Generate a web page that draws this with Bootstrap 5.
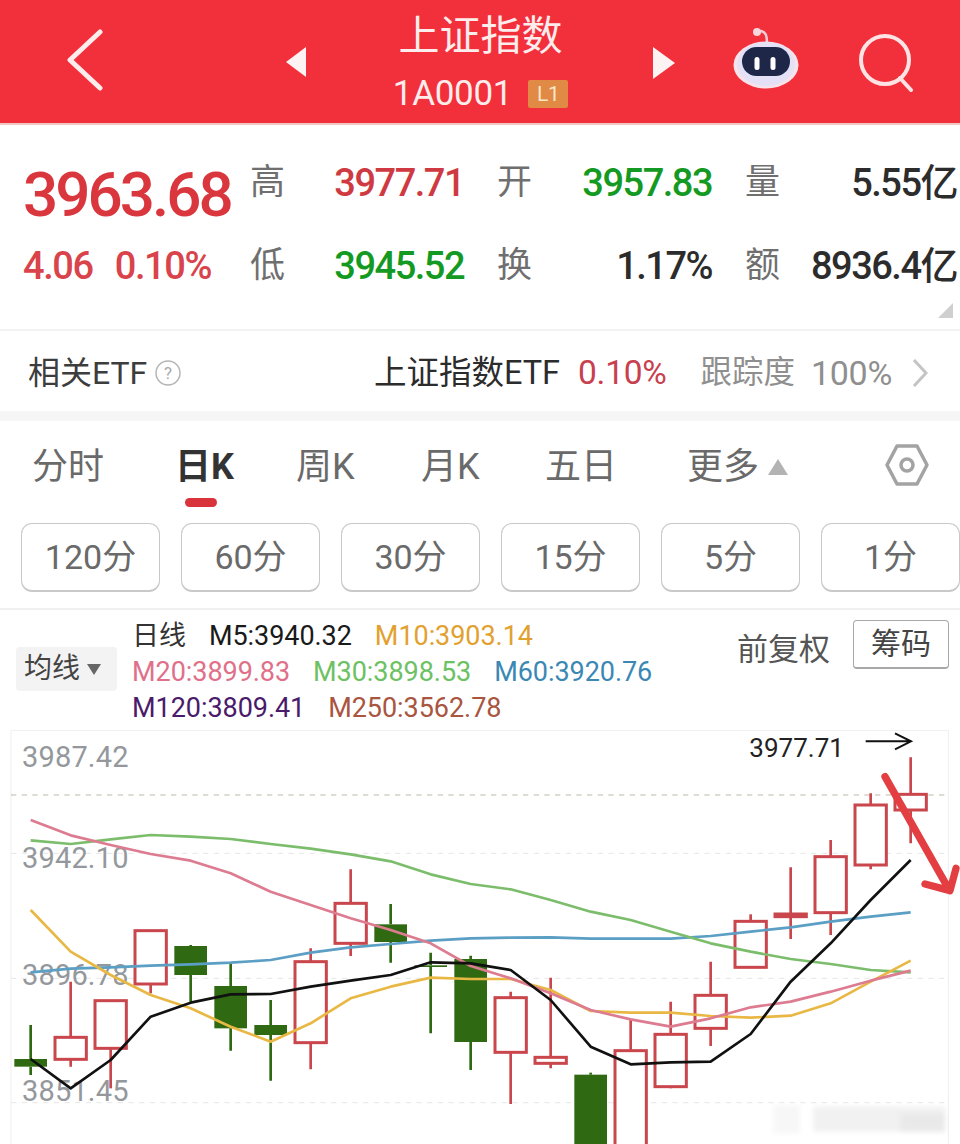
<!DOCTYPE html>
<html lang="zh-CN">
<head>
  <meta charset="UTF-8" />
  <meta name="viewport" content="width=device-width, initial-scale=1" />
  <title>上证指数</title>
  <link rel="stylesheet" href="https://cdn.jsdelivr.net/npm/bootstrap@5.3.0/dist/css/bootstrap.min.css" />
  <style>
    html, body { margin: 0; background: #fff; }
    body { width: 960px; height: 1144px; overflow: hidden; font-family: Roboto, "Noto Sans CJK SC", sans-serif; color: #333; }

    /* header */
    .top-bar { height: 125px; background: #f2303c; color: #fdecec; border-bottom: 2px solid #f3c6c8; padding-top: 11px; }
    .top-back { margin-left: 66px; width: 38px; margin-top: 18px; }
    .top-prev { margin-left: 182px; width: 22px; margin-top: 36px; }
    .top-mid { width: 345px; line-height: 1; }
    .top-title { font-size: 41px; line-height: 50px; }
    .top-code { font-size: 35px; line-height: 40px; margin-top: 13px; letter-spacing: -.3px; }
    .top-tag { background: #e08a45; color: #f9e6c8; font-size: 21px; width: 40px; height: 28px; line-height: 28px; border-radius: 2px; margin-left: 16px; }
    .top-next { margin-top: 36px; }
    .top-bot { margin-left: 58px; margin-top: 17px; }
    .top-find { margin-left: 60px; margin-top: 21px; }

    /* quote */
    .quote-box { height: 206px; position: relative; border-bottom: 2px solid #f2f2f2; }
    .quote-rows { display: grid; grid-template-columns: 194px 214px 215px 212px; column-gap: 33px; padding: 17px 0 0 23px; grid-auto-rows: 83px; align-items: center; white-space: nowrap; }
    .quote-cell { display: flex; justify-content: space-between; align-items: center; font-size: 38px; letter-spacing: -1.5px; font-weight: 500; }
    .quote-cell i { font-style: normal; font-weight: 400; color: #6f6f6f; font-size: 35px; letter-spacing: 0; }
    .quote-big { font-size: 62px; font-weight: 500; color: #d9363e; letter-spacing: -3px; line-height: 1; margin-top: 22px; }
    .quote-sub { font-size: 38px; color: #d9434b; letter-spacing: -1.4px; font-weight: 500; gap: 22px; }
    .up-red { color: #cf3a42; }
    .down-green { color: #149a22; }
    .flat-dark { color: #2c2c2c; }
    .quote-corner { position: absolute; right: 7px; bottom: 11px; width: 0; height: 0; border-style: solid; border-width: 0 0 15px 15px; border-color: transparent transparent #cfcfcf transparent; }

    /* etf row */
    .etf-row { box-sizing: content-box; height: 76px; padding: 4px 32px 0 28px; font-size: 32px; color: #3d3d3d; border-bottom: 10px solid #f6f6f6; }
    .etf-help { margin-left: 8px; }
    .etf-name { font-size: 32.5px; }
    .etf-pct { color: #c8404f; margin-left: 18px; font-size: 33.5px; letter-spacing: -.3px; }
    .etf-grey { color: #8f8f8f; margin-left: 34px; font-size: 31.5px; }
    .etf-grey-num { color: #8f8f8f; margin-left: 16px; font-size: 34px; letter-spacing: -.3px; }
    .etf-next { margin-left: 20px; }

    /* period tabs */
    .tab-row { height: 92px; position: relative; font-size: 36px; color: #6a6a6a; }
    .tab-row > span, .tab-row > svg { position: absolute; top: 22px; line-height: 48px; }
    .tab-on { color: #333; font-weight: 700; }
    .tab-line { position: absolute; left: 185px; top: 77px; width: 32px; height: 9px; border-radius: 5px; background: #d9333c; }
    .min-row { gap: 21px; padding: 10px 0 0 21px; width: 981px; height: 97px; border-bottom: 2px solid #f0f0f0; }
    .min-btn { width: 139px; height: 69px; border: 1px solid #c9c9c9; border-bottom-width: 2px; border-radius: 11px; color: #6a6a6a; font-size: 34px; background: #fff; padding: 0; flex: none; }

    /* moving averages */
    .ma-box { height: 120px; position: relative; }
    .ma-pick { position: absolute; left: 16px; top: 37px; width: 101px; height: 44px; background: #f3f3f3; border-radius: 4px; font-size: 28px; color: #444; padding-left: 8px; }
    .ma-arrow { width: 0; height: 0; border-style: solid; border-width: 11px 7px 0 7px; border-color: #666 transparent transparent transparent; margin-left: 7px; }
    .ma-lines { padding: 8px 0 0 132px; font-size: 27px; line-height: 36px; letter-spacing: -.05px; white-space: nowrap; }
    .ma-lines span { margin-right: 23px; }
    .ma-adj { position: absolute; left: 737px; top: 19px; font-size: 31px; line-height: 42px; color: #555; }
    .ma-chip { position: absolute; left: 853px; top: 10px; width: 96px; height: 49px; border: 1px solid #a8a8a8; border-bottom-width: 2px; border-radius: 4px; font-size: 30px; color: #444; text-align: center; line-height: 46px; }

    /* chart */
    .chart-svg { display: block; width: 960px; height: 414px; }
    .axis-text { font-family: Roboto, sans-serif; font-size: 87px; fill: #94989c; letter-spacing: .5px; }
    .max-text { font-family: Roboto, sans-serif; font-size: 78px; fill: #222; }
  </style>
</head>
<body>
  <div class="top-bar d-flex">
    <svg class="top-back" height="62" viewBox="0 0 38 62"><path d="M34 3 4 31l30 28" fill="none" stroke="#fdecec" stroke-width="5" stroke-linecap="round" stroke-linejoin="round"/></svg>
    <svg class="top-prev" height="30" viewBox="0 0 22 30"><path d="M20 0v30L0 15z" fill="#fdf3f3"/></svg>
    <div class="top-mid text-center">
      <div class="top-title">上证指数</div>
      <div class="top-code d-flex justify-content-center align-items-center">1A0001<span class="top-tag">L1</span></div>
    </div>
    <svg class="top-next" width="22" height="32" viewBox="0 0 22 32"><path d="M0 0v32l22-16z" fill="#fdf3f3"/></svg>
    <svg class="top-bot" width="66" height="62" viewBox="0 0 66 62">
      <path d="M27 3c5 0 7 4 7 11" fill="none" stroke="#f3cdd6" stroke-width="2.5"/>
      <circle cx="24" cy="4" r="4" fill="#f6d5dd"/>
      <ellipse cx="33" cy="37" rx="32.5" ry="23.5" fill="#f8e3ea"/>
      <ellipse cx="33" cy="36" rx="29" ry="22" fill="#e4e0f6"/>
      <rect x="9" y="19" width="48" height="29" rx="14.5" fill="#1e2748"/>
      <rect x="21.5" y="29" width="5" height="13" rx="2.5" fill="#fff"/>
      <rect x="37.5" y="29" width="5" height="13" rx="2.5" fill="#fff"/>
    </svg>
    <svg class="top-find" width="56" height="60" viewBox="0 0 56 60">
      <circle cx="26" cy="28" r="24" fill="none" stroke="#fde3e3" stroke-width="4"/>
      <path d="M41 46l11 12" stroke="#fde3e3" stroke-width="4" stroke-linecap="round"/>
    </svg>
  </div>

  <div class="quote-box">
    <div class="quote-rows">
      <div class="quote-big">3963.68</div>
      <div class="quote-cell"><i>高</i><span class="up-red">3977.71</span></div>
      <div class="quote-cell"><i>开</i><span class="down-green">3957.83</span></div>
      <div class="quote-cell"><i>量</i><span class="flat-dark">5.55亿</span></div>
      <div class="quote-sub d-flex"><span>4.06</span><span>0.10%</span></div>
      <div class="quote-cell"><i>低</i><span class="down-green">3945.52</span></div>
      <div class="quote-cell"><i>换</i><span class="flat-dark">1.17%</span></div>
      <div class="quote-cell"><i>额</i><span class="flat-dark">8936.4亿</span></div>
    </div>
    <div class="quote-corner"></div>
  </div>

  <div class="etf-row d-flex align-items-center">
    <span>相关ETF</span>
    <svg class="etf-help" width="26" height="26" viewBox="0 0 26 26"><circle cx="13" cy="13" r="12" fill="none" stroke="#b5b5b5" stroke-width="1.5"/><text x="13" y="19" font-size="17" fill="#aaa" text-anchor="middle" font-family="Roboto">?</text></svg>
    <span class="ms-auto flat-dark etf-name">上证指数ETF</span>
    <span class="etf-pct">0.10%</span>
    <span class="etf-grey">跟踪度</span>
    <span class="etf-grey-num">100%</span>
    <svg class="etf-next" width="16" height="28" viewBox="0 0 16 28"><path d="M2 1l12 13L2 27" fill="none" stroke="#c4c4c4" stroke-width="3"/></svg>
  </div>

  <div class="tab-row">
    <span style="left:32px">分时</span>
    <span class="tab-on" style="left:175px">日K</span>
    <span style="left:296px">周K</span>
    <span style="left:421px">月K</span>
    <span style="left:545px">五日</span>
    <span style="left:687px">更多</span>
    <svg style="left:768px;top:38px" width="20" height="16" viewBox="0 0 20 16"><path d="M10 0l10 16H0z" fill="#b3b3b3"/></svg>
    <svg style="left:885px;top:23px" width="44" height="42" viewBox="0 0 44 42"><path d="M12 2h20l10 19-10 19H12L2 21z" fill="none" stroke="#a3a3a3" stroke-width="3.5" stroke-linejoin="round"/><circle cx="22" cy="21" r="6" fill="none" stroke="#a3a3a3" stroke-width="3.5"/></svg>
    <div class="tab-line"></div>
  </div>

  <div class="min-row d-flex">
    <button class="min-btn">120分</button>
    <button class="min-btn">60分</button>
    <button class="min-btn">30分</button>
    <button class="min-btn">15分</button>
    <button class="min-btn">5分</button>
    <button class="min-btn">1分</button>
  </div>

  <div class="ma-box">
    <div class="ma-pick d-flex align-items-center">均线<span class="ma-arrow"></span></div>
    <div class="ma-lines">
      <div><span style="color:#333">日线</span><span style="color:#1a1a1a">M5:3940.32</span><span style="color:#e2a12f">M10:3903.14</span></div>
      <div><span style="color:#e0708a">M20:3899.83</span><span style="color:#6cc163">M30:3898.53</span><span style="color:#3b88b5">M60:3920.76</span></div>
      <div><span style="color:#4a1a6b">M120:3809.41</span><span style="color:#a9553f">M250:3562.78</span></div>
    </div>
    <div class="ma-adj">前复权</div>
    <div class="ma-chip">筹码</div>
  </div>

  <svg class="chart-svg" id="chart" viewBox="0 0 2880 1242"></svg>

  <script src="https://cdn.jsdelivr.net/npm/bootstrap@5.3.0/dist/js/bootstrap.bundle.min.js"></script>
  <script>
    // chart coordinates are 3x page pixels, y starts at the top of the chart
    const red = "#c9464c", green = "#2f6a12";
    // top wick, body top, body bottom, wick bottom, up?
    const candles = [
      [885, 987, 1010, 1035, 0], [755, 922, 988, 1010, 1], [812, 812, 955, 1075, 1], [602, 602, 762, 790, 1],
      [645, 648, 735, 815, 0], [700, 768, 895, 962, 0], [810, 885, 915, 1052, 0], [655, 695, 938, 1018, 1],
      [418, 520, 640, 678, 1], [522, 583, 636, 698, 0], [668, 706, 711, 910, 0], [677, 687, 936, 1020, 0],
      [785, 803, 967, 1122, 1], [743, 982, 1000, 1015, 1], [1028, 1034, 1260, 1260, 0], [870, 962, 1260, 1260, 1],
      [815, 913, 1070, 1075, 1], [695, 796, 895, 948, 1], [553, 574, 712, 712, 1], [412, 552, 560, 627, 1],
      [330, 380, 548, 615, 1], [190, 225, 405, 418, 1], [82, 193, 240, 340, 1]
    ];
    const lines = [
      ["#5b9fc4", [727,716,712,707,703,698,690,668,652,642,632,625,623,622,626,626,626,618,605,592,575,560,547]],
      ["#7cbd6c", [331,342,328,315,320,327,342,356,373,394,433,462,478,510,545,570,605,640,665,687,702,720,727]],
      ["#e9b844", [540,665,735,795,835,890,935,880,805,770,743,747,747,780,843,848,848,858,863,857,820,755,692]],
      ["#dd7b90", [270,316,345,372,392,430,485,525,565,600,640,708,745,790,840,868,890,865,832,815,785,752,722]],
      ["#111", [987,1075,990,860,818,793,792,770,752,735,697,700,720,810,950,1003,997,995,912,755,640,510,390]]
    ];
    const xOf = i => 92 + i * 120;
    let svg = `<defs><filter id="smudge"><feGaussianBlur stdDeviation="8"/></filter></defs>`;

    // frame and grid
    svg += `<path d="M33 0V1242M2845 0V1242M33 1H2845" fill="none" stroke="#eeeeee" stroke-width="3"/>`;
    svg += `<path d="M33 195H2845" stroke="#bdb9a8" stroke-width="3" stroke-dasharray="16 16"/>`;
    [370, 745, 1118].forEach(y => {
      svg += `<path d="M33 ${y}H2845" stroke="#e6e6e6" stroke-width="3" stroke-dasharray="16 16"/>`;
    });

    // axis labels sit under the series
    [["3987.42", 110], ["3942.10", 415], ["3896.78", 765], ["3851.45", 1112]].forEach(a => {
      svg += `<text class="axis-text" x="66" y="${a[1]}">${a[0]}</text>`;
    });

    // soft watermark bottom right
    svg += `<g filter="url(#smudge)"><rect x="2320" y="1125" width="80" height="85" fill="#f7f7f7"/><rect x="2440" y="1130" width="395" height="75" fill="#f1f1f1"/><rect x="2700" y="1150" width="135" height="55" fill="#e9e9e9"/></g>`;

    candles.forEach((c, i) => {
      const x = xOf(i), col = c[4] ? red : green;
      svg += `<path d="M${x} ${c[0]}V${c[1]}M${x} ${c[2]}V${c[3]}" stroke="${col}" stroke-width="8"/>`;
      if (c[4]) {
        svg += `<rect x="${x - 47}" y="${c[1]}" width="94" height="${c[2] - c[1]}" fill="#fff" stroke="${col}" stroke-width="9"/>`;
      } else {
        svg += `<rect x="${x - 49}" y="${c[1]}" width="98" height="${c[2] - c[1]}" fill="${col}"/>`;
      }
    });

    lines.forEach(l => {
      const pts = l[1].map((y, i) => xOf(i) + "," + y).join(" ");
      svg += `<polyline points="${pts}" fill="none" stroke="${l[0]}" stroke-width="8" stroke-linejoin="round"/>`;
    });

    // highest price marker
    svg += `<text class="max-text" x="2248" y="80">3977.71</text>`;
    svg += `<path d="M2597 34H2730M2685 10L2733 34L2685 58" fill="none" stroke="#111" stroke-width="6"/>`;

    // hand drawn red arrow
    svg += `<path d="M2655 140L2845 475M2775 462L2850 482L2868 415" fill="none" stroke="#e33e42" stroke-width="22" stroke-linecap="round" stroke-linejoin="round"/>`;

    document.getElementById("chart").innerHTML = svg;
  </script>
</body>
</html>
